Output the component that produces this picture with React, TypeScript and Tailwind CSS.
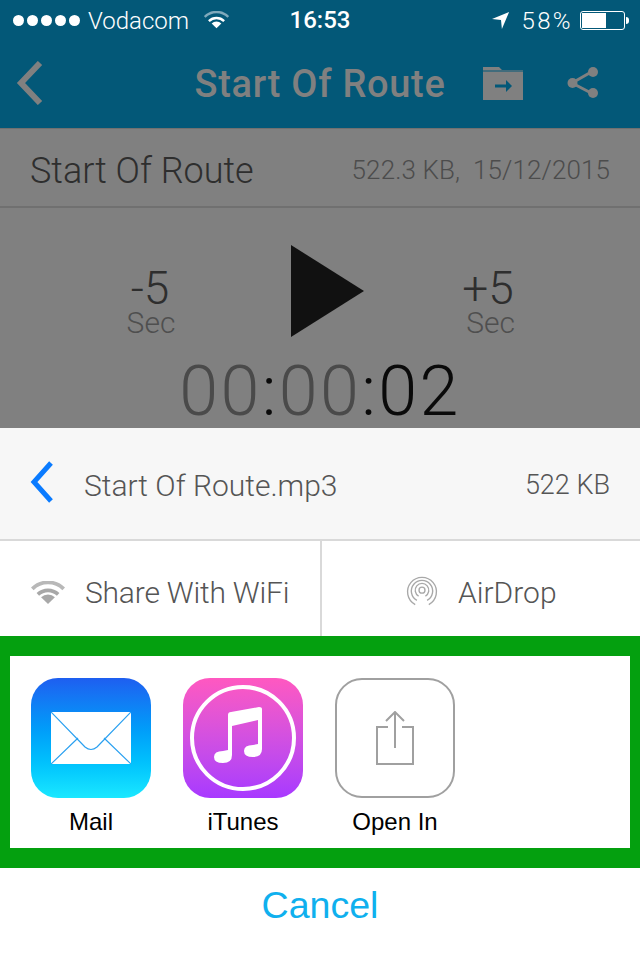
import React from "react";

const sans = "font-['Liberation_Sans',sans-serif]";
const light = "font-['Roboto',sans-serif] font-light";

function WifiIcon({ color, dim, className }: { color: string; dim: string; className: string }) {
  return (
    <svg viewBox="0 0 36 26" className={className}>
      <path d="M1 8.5 A24 24 0 0 1 35 8.5" fill="none" stroke={dim} strokeWidth="4" />
      <path d="M7 14.5 A16 16 0 0 1 29 14.5" fill="none" stroke={color} strokeWidth="4" />
      <path d="M18 25 L10.5 17.5 A11 11 0 0 1 25.5 17.5 Z" fill={color} />
    </svg>
  );
}

function StatusBar() {
  return (
    <div className={`flex h-10 items-center text-white ${sans} relative`}>
      <div className="ml-[13px] flex gap-[3px]">
        {[0, 1, 2, 3, 4].map((i) => (
          <div key={i} className="h-[11px] w-[11px] rounded-full bg-white" />
        ))}
      </div>
      <span className={`ml-[8px] mt-[2px] text-[24px] ${light}`}>Vodacom</span>
      <svg viewBox="0 0 36 26" className="ml-[15px] h-[18px] w-[25px]">
        <path d="M1 8.5 A24 24 0 0 1 35 8.5" fill="none" stroke="#7fa9bb" strokeWidth="3.5" />
        <path d="M7 14.5 A16 16 0 0 1 29 14.5" fill="none" stroke="#fff" strokeWidth="3.5" />
        <path d="M18 25 L11 18 A10 10 0 0 1 25 18 Z" fill="#fff" />
      </svg>
      <span className="absolute left-0 right-0 text-center font-['Roboto',sans-serif] text-[24px] font-medium">
        16:53
      </span>
      <div className="ml-auto mr-[11px] flex items-center">
        <svg viewBox="0 0 20 20" className="h-[18px] w-[18px]">
          <path d="M0 9 L19 1 L11 20 L10 10 Z" fill="#fff" />
        </svg>
        <span className={`ml-[11px] mt-[1px] text-[24px] tracking-[2.4px] ${light}`}>58%</span>
        <div className="ml-[7px] h-[19px] w-[45px] rounded-[3px] border border-white p-[1px]">
          <div className="h-full w-[24px] bg-white" />
        </div>
        <div className="ml-[1px] h-[7px] w-[3px] rounded-r-sm bg-white" />
      </div>
    </div>
  );
}

function NavBar() {
  return (
    <div className="relative flex h-[88px] items-center text-[#808080]">
      <svg viewBox="0 0 28 44" className="ml-[16px] mb-[3px] h-[44px] w-[28px]">
        <path d="M24 2 L5 22 L24 42" fill="none" stroke="#808080" strokeWidth="6" />
      </svg>
      <span className="absolute left-0 right-0 top-[22px] text-center font-['Roboto',sans-serif] text-[38px] leading-[44px] tracking-[0.7px] font-medium">
        Start Of Route
      </span>
      <svg viewBox="0 0 40 33" className="absolute left-[483px] top-[27px] h-[33px] w-[40px]">
        <path d="M0 0 H16 L19 3 H40 V33 H0 Z" fill="#808080" />
        <path d="M0 4 H40" stroke="#035878" strokeWidth="1" />
        <path d="M12 19 H23" stroke="#035878" strokeWidth="3" />
        <path d="M23 13 L29 19 L23 25 Z" fill="#035878" />
      </svg>
      <svg viewBox="0 0 32 32" className="absolute left-[567px] top-[27px] h-[32px] w-[32px]">
        <path d="M5 16 L26 4 M5 16 L26 27" stroke="#808080" strokeWidth="3" />
        <circle cx="5.5" cy="16" r="5" fill="#808080" />
        <circle cx="26" cy="5" r="5" fill="#808080" />
        <circle cx="26" cy="26" r="5" fill="#808080" />
      </svg>
    </div>
  );
}

function Player() {
  return (
    <div className="bg-[#808080]">
      <div className={`flex h-[79px] items-center justify-between border-y border-[#707070] pl-[30px] pr-[30px] pt-[6px] ${light}`}>
        <span className="text-[36px] text-[#2e2e2e]">Start Of Route</span>
        <span className="text-[26px] tracking-[0.1px] text-[#4c4c4c]">522.3 KB,&nbsp; 15/12/2015</span>
      </div>
      <div className={`h-[221px] border-t border-[#707070] ${light}`}>
        <div className="flex h-[150px] items-start">
          <div className="ml-[124px] mt-[58px] flex w-[52px] flex-col items-center">
            <span className="text-[46px] leading-[44px] text-[#2e2e2e]">-5</span>
            <span className="ml-[2px] text-[30px] leading-[26px] text-[#4f4f4f]">Sec</span>
          </div>
          <svg viewBox="0 0 73 92" className="ml-[115px] mt-[37px] h-[92px] w-[73px]">
            <path d="M0 0 L73 46 L0 92 Z" fill="#111" />
          </svg>
          <div className="ml-[98px] mt-[58px] flex w-[52px] flex-col items-center">
            <span className="text-[46px] leading-[44px] text-[#2e2e2e]">+5</span>
            <span className="ml-[5px] text-[30px] leading-[26px] text-[#4f4f4f]">Sec</span>
          </div>
        </div>
        <div className="text-center text-[70px] leading-[66px] tracking-[2.4px] text-[#0a0a0a]">
          <span className="text-[#4a4a4a]">00</span>:<span className="text-[#4a4a4a]">00</span>:02
        </div>
      </div>
    </div>
  );
}

function AirDropIcon() {
  return (
    <svg viewBox="0 0 36 40" className="mt-[4px] h-[34px] w-[36px]" fill="none" stroke="#a8a8a8" strokeWidth="1.6">
      <path d="M10 36 A17 17 0 1 1 26 36" />
      <path d="M12 31 A12.5 12.5 0 1 1 24 31" />
      <path d="M14 26 A8 8 0 1 1 22 26" />
      <circle cx="18" cy="19" r="3.5" />
    </svg>
  );
}

function AppTile({ label, children }: { label: string; children: React.ReactNode }) {
  return (
    <div className="flex w-[120px] flex-col items-center">
      {children}
      <span className={`mt-[8px] text-[24px] leading-[32px] text-black ${sans} whitespace-nowrap`}>{label}</span>
    </div>
  );
}

export default function App() {
  return (
    <div className="flex h-[960px] w-[640px] flex-col overflow-hidden bg-white">
      <div className="bg-[#035878]">
        <StatusBar />
        <NavBar />
      </div>
      <Player />
      <div className={`flex h-[113px] items-center border-b-2 border-[#d9d9d9] bg-[#f7f7f7] pl-[30px] pr-[30px] ${light}`}>
        <svg viewBox="0 0 24 42" className="mb-[3px] h-[42px] w-[24px]">
          <path d="M21 2 L4 21 L21 40" fill="none" stroke="#0a7bff" strokeWidth="5" />
        </svg>
        <span className="ml-[30px] mt-[4px] text-[30px] text-[#555]">Start Of Route.mp3</span>
        <span className="ml-auto mt-[4px] text-[27px] text-[#555]">522 KB</span>
      </div>
      <div className={`flex h-[95px] ${light}`}>
        <div className="flex w-[322px] items-center border-r-2 border-[#d9d9d9] pl-[31px]">
          <WifiIcon color="#a8a8a8" dim="#b8b8b8" className="mt-[9px] h-[24px] w-[34px]" />
          <span className="ml-[20px] mt-[8px] text-[30px] tracking-[-0.2px] text-[#555]">Share With WiFi</span>
        </div>
        <div className="flex flex-1 items-center pl-[82px]">
          <AirDropIcon />
          <span className="ml-[18px] mt-[8px] text-[30px] text-[#555]">AirDrop</span>
        </div>
      </div>
      <div className="flex h-[232px] gap-[32px] border-x-[10px] border-y-[20px] border-[#04a00f] bg-white pl-[21px] pt-[22px]">
        <AppTile label="Mail">
          <div className="flex h-[120px] w-[120px] items-center justify-center rounded-[27px] bg-gradient-to-b from-[#1e5ef0] to-[#1ae8ff]">
            <svg viewBox="0 0 80 52" className="h-[52px] w-[80px]">
              <rect width="80" height="52" fill="#fff" />
              <path d="M0 0 L34 35 Q40 40 46 35 L80 0 M0 52 L27 26 M80 52 L53 26" fill="none" stroke="#2aa0f0" strokeWidth="1.2" />
            </svg>
          </div>
        </AppTile>
        <AppTile label="iTunes">
          <div className="flex h-[120px] w-[120px] items-center justify-center rounded-[27px] bg-gradient-to-b from-[#ff58c0] to-[#a838ff]">
            <svg viewBox="0 0 120 120" className="h-[120px] w-[120px]">
              <circle cx="60" cy="60" r="51" fill="none" stroke="#fff" strokeWidth="4" />
              <path
                d="M45 37 Q45 34 48 34 L76 29 Q79 29 79 31 V71 Q79 79 70 79 Q61 79 61 73 Q61 67 70 67 L75 66 V42 L49 48 V77 Q49 85 40 85 Q31 85 31 79 Q31 73 40 73 L45 72 Z"
                fill="#fff"
              />
            </svg>
          </div>
        </AppTile>
        <AppTile label="Open In">
          <div className="flex h-[120px] w-[120px] items-center justify-center rounded-[27px] border-2 border-[#a0a0a0]">
            <svg viewBox="0 0 40 56" className="mt-[2px] h-[56px] w-[40px]" fill="none" stroke="#a0a0a0" strokeWidth="2">
              <path d="M13 16 H2 V53 H38 V16 H27" />
              <path d="M20 1 V37 M11 10 L20 1 L29 10" />
            </svg>
          </div>
        </AppTile>
      </div>
      <div className={`flex flex-1 items-start justify-center pt-[14px] text-[37.6px] leading-[46px] text-[#0fb0ee] ${sans}`}>
        Cancel
      </div>
    </div>
  );
}
